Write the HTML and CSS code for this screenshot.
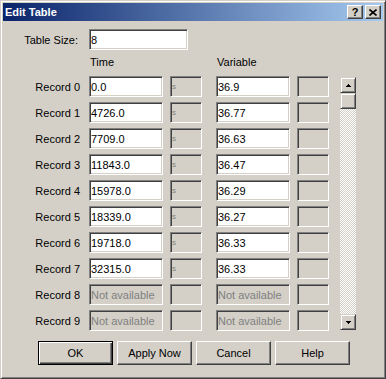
FILE: index.html
```html
<!DOCTYPE html>
<html lang="en">
<head>
    <meta charset="UTF-8">
    <meta name="viewport" content="width=device-width, initial-scale=1.0">
    <title>Edit Table</title>
    <link rel="stylesheet" href="styles.css">
</head>
<body>
<div class="window">
    <div class="titlebar">
        <span class="title">Edit Table</span>
        <div class="caption-buttons">
            <span class="cap-btn">?</span>
            <span class="cap-btn">
                <svg width="8" height="7" viewBox="0 0 8 7"><path d="M0.5 0.5 L7.5 6.5 M7.5 0.5 L0.5 6.5" stroke="#000" stroke-width="1.6" fill="none"/></svg>
            </span>
        </div>
    </div>
    <div class="content">
        <div class="size-row">
            <label class="row-label" for="tableSize">Table Size:</label>
            <input class="field" type="text" id="tableSize" value="8">
        </div>

        <div class="records">
            <div class="col-head"></div>
            <div class="col-head">Time</div>
            <div class="col-head"></div>
            <div class="col-head">Variable</div>
            <div class="col-head"></div>
            <div class="col-head"></div>

            <div class="scrollbar">
                <div class="sb-btn"><svg width="5" height="3" viewBox="0 0 5 3"><path d="M2 0h1v1h1v1h1v1H0V2h1V1h1z" fill="#000"/></svg></div>
                <div class="sb-thumb"></div>
                <div class="sb-track"></div>
                <div class="sb-btn"><svg width="5" height="3" viewBox="0 0 5 3"><path d="M0 0h5v1H4v1H3v1H2V2H1V1H0z" fill="#000"/></svg></div>
            </div>

            <div class="row-label">Record 0</div>
            <input class="field" type="text" value="0.0">
            <input class="field unit" type="text" value="s" disabled>
            <input class="field" type="text" value="36.9">
            <input class="field unit" type="text" value="" disabled>

            <div class="row-label">Record 1</div>
            <input class="field" type="text" value="4726.0">
            <input class="field unit" type="text" value="s" disabled>
            <input class="field" type="text" value="36.77">
            <input class="field unit" type="text" value="" disabled>

            <div class="row-label">Record 2</div>
            <input class="field" type="text" value="7709.0">
            <input class="field unit" type="text" value="s" disabled>
            <input class="field" type="text" value="36.63">
            <input class="field unit" type="text" value="" disabled>

            <div class="row-label">Record 3</div>
            <input class="field" type="text" value="11843.0">
            <input class="field unit" type="text" value="s" disabled>
            <input class="field" type="text" value="36.47">
            <input class="field unit" type="text" value="" disabled>

            <div class="row-label">Record 4</div>
            <input class="field" type="text" value="15978.0">
            <input class="field unit" type="text" value="s" disabled>
            <input class="field" type="text" value="36.29">
            <input class="field unit" type="text" value="" disabled>

            <div class="row-label">Record 5</div>
            <input class="field" type="text" value="18339.0">
            <input class="field unit" type="text" value="s" disabled>
            <input class="field" type="text" value="36.27">
            <input class="field unit" type="text" value="" disabled>

            <div class="row-label">Record 6</div>
            <input class="field" type="text" value="19718.0">
            <input class="field unit" type="text" value="s" disabled>
            <input class="field" type="text" value="36.33">
            <input class="field unit" type="text" value="" disabled>

            <div class="row-label">Record 7</div>
            <input class="field" type="text" value="32315.0">
            <input class="field unit" type="text" value="s" disabled>
            <input class="field" type="text" value="36.33">
            <input class="field unit" type="text" value="" disabled>

            <div class="row-label">Record 8</div>
            <input class="field" type="text" value="Not available" disabled>
            <input class="field unit" type="text" value="" disabled>
            <input class="field" type="text" value="Not available" disabled>
            <input class="field unit" type="text" value="" disabled>

            <div class="row-label">Record 9</div>
            <input class="field" type="text" value="Not available" disabled>
            <input class="field unit" type="text" value="" disabled>
            <input class="field" type="text" value="Not available" disabled>
            <input class="field unit" type="text" value="" disabled>
        </div>

        <div class="buttons">
            <button class="btn default">OK</button>
            <button class="btn">Apply Now</button>
            <button class="btn">Cancel</button>
            <button class="btn">Help</button>
        </div>
    </div>
</div>
</body>
</html>
```

FILE: styles.css
```css
body {
    margin: 0;
    font-family: "Liberation Sans", Arial, sans-serif;
    font-size: 11px;
    color: #000;
    background-color: #d4d0c8;
}

.window {
    box-sizing: border-box;
    width: 386px;
    height: 379px;
    padding: 2px;
    background-color: #d4d0c8;
    border: 1px solid;
    border-color: #d4d0c8 #404040 #404040 #d4d0c8;
    box-shadow: inset 1px 1px #fff, inset -1px -1px #808080;
}

.titlebar {
    height: 18px;
    display: flex;
    align-items: center;
    justify-content: space-between;
    padding: 0 2px;
    background: linear-gradient(to right, #0a246a, #a6caf0);
}

.title {
    color: #fff;
    font-weight: bold;
    font-size: 11px;
    line-height: 18px;
}

.caption-buttons {
    display: flex;
    gap: 2px;
}

.cap-btn {
    box-sizing: border-box;
    width: 16px;
    height: 14px;
    display: flex;
    align-items: center;
    justify-content: center;
    background-color: #d4d0c8;
    border: 1px solid;
    border-color: #fff #404040 #404040 #fff;
    box-shadow: inset -1px -1px #808080;
    font-weight: bold;
    font-size: 11px;
    line-height: 12px;
}

.content {
    padding-top: 8px;
}

.size-row {
    display: grid;
    grid-template-columns: 79px 99px;
    column-gap: 7px;
    align-items: center;
}

.size-row .row-label {
    padding-right: 4px;
}

.row-label {
    text-align: right;
    padding-right: 2px;
    white-space: nowrap;
}

.field {
    box-sizing: border-box;
    height: 21px;
    width: 100%;
    margin: 0;
    padding: 0 1px;
    font-family: "Liberation Sans", Arial, sans-serif;
    font-size: 11px;
    color: #000;
    background-color: #fff;
    border: 1px solid;
    border-color: #808080 #fff #fff #808080;
    box-shadow: inset 1px 1px #404040, inset -1px -1px #d4d0c8;
    outline: none;
}

.field:disabled {
    background-color: #d4d0c8;
    color: #808080;
}

.unit {
    width: 32px;
    font-size: 8px;
}

.records {
    margin-top: 6px;
    display: grid;
    grid-template-columns: 79px 74px 39px 74px 36px 16px;
    grid-template-rows: 15px repeat(10, 21px);
    column-gap: 7px;
    row-gap: 5px;
    align-items: center;
}

.col-head {
    align-self: start;
    line-height: 13px;
    padding-left: 1px;
}

.scrollbar {
    grid-column: 6;
    grid-row: 2 / span 10;
    align-self: stretch;
    margin: 1px 0;
    display: flex;
    flex-direction: column;
}

.sb-btn, .sb-thumb {
    box-sizing: border-box;
    width: 16px;
    height: 16px;
    flex: none;
    display: flex;
    align-items: center;
    justify-content: center;
    background-color: #d4d0c8;
    border: 1px solid;
    border-color: #d4d0c8 #404040 #404040 #d4d0c8;
    box-shadow: inset 1px 1px #fff, inset -1px -1px #808080;
}

.sb-track {
    flex: 1;
    background: repeating-conic-gradient(#fff 0 25%, #d4d0c8 0 50%) 0 0 / 2px 2px;
}

.buttons {
    margin: 10px 0 0 35px;
    display: flex;
    gap: 4px;
}

.btn {
    box-sizing: border-box;
    width: 75px;
    height: 24px;
    padding: 0;
    font-family: "Liberation Sans", Arial, sans-serif;
    font-size: 11px;
    color: #000;
    background-color: #d4d0c8;
    border: 1px solid;
    border-color: #fff #404040 #404040 #fff;
    box-shadow: inset -1px -1px #808080;
}

.btn.default {
    border-color: #000;
    box-shadow: inset 1px 1px #fff, inset -1px -1px #404040, inset -2px -2px #808080;
}
```
